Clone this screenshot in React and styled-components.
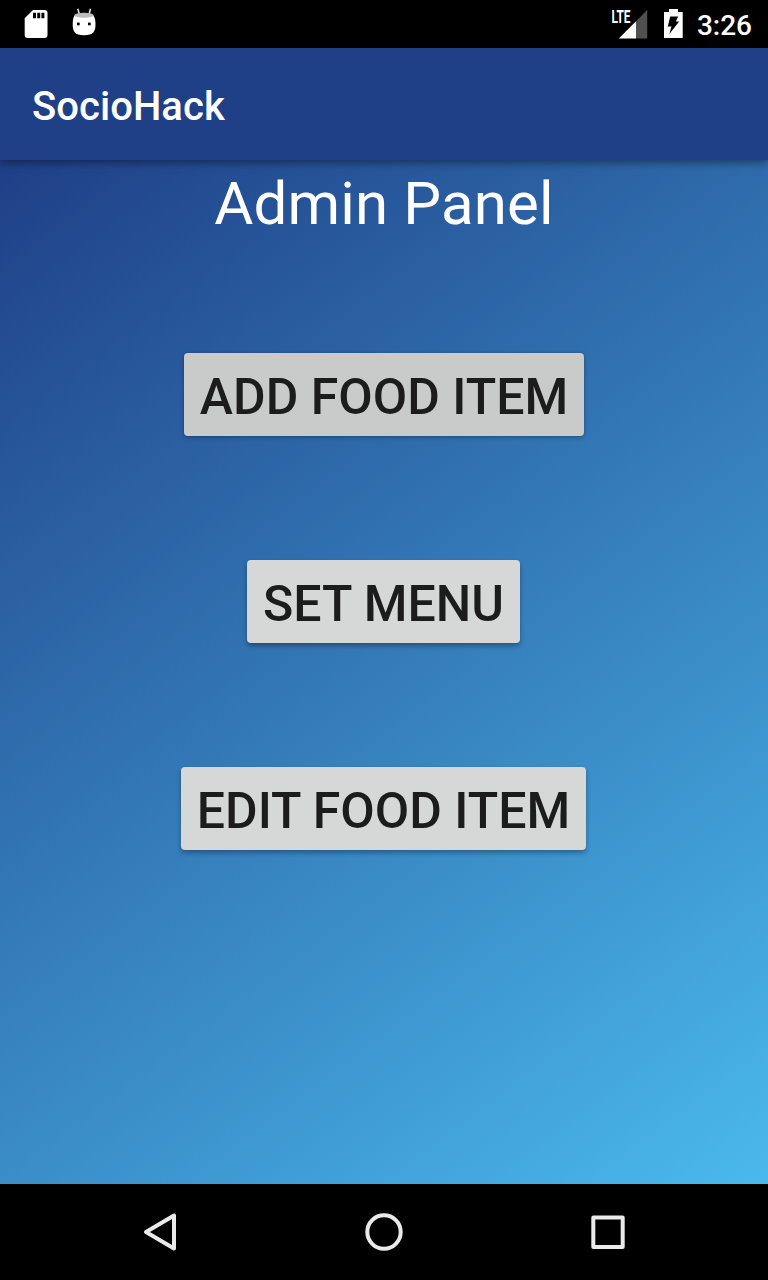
import React from "react";
import styled, { createGlobalStyle } from "styled-components";

const GlobalStyle = createGlobalStyle`
  * { box-sizing: border-box; }
  body { margin: 0; background: #000; font-family: Roboto, "Liberation Sans", sans-serif; }
`;

const Screen = styled.div`
  width: 768px;
  height: 1280px;
  display: flex;
  flex-direction: column;
  overflow: hidden;
`;

const StatusBar = styled.header`
  height: 48px;
  padding: 0 16px 0 20px;
  display: flex;
  justify-content: space-between;
  background: #000;
`;

const StatusGroup = styled.div`
  display: flex;
  align-items: flex-start;
  gap: ${(p) => p.$gap};
`;

const Clock = styled.span`
  margin-left: 5px;
  color: #fff;
  font-size: 28px;
  font-weight: 500;
  line-height: 52px;
`;

const AppBar = styled.div`
  position: relative;
  z-index: 1;
  flex: 0 0 112px;
  padding: 6px 32px 0;
  display: flex;
  align-items: center;
  background: #1f3f87;
  box-shadow: 0 3px 8px rgba(0, 0, 0, 0.4);
`;

const AppTitle = styled.h1`
  margin: 0;
  color: #fff;
  font-size: 40px;
  font-weight: 500;
  line-height: 48px;
  letter-spacing: 0.05px;
`;

const Content = styled.main`
  flex: 1;
  padding-top: 4px;
  display: flex;
  flex-direction: column;
  align-items: center;
  background: linear-gradient(143.13deg, #1f3f87, #4ab9ec);
`;

const PanelTitle = styled.h2`
  margin: 0 0 109px;
  color: #fff;
  font-size: 60px;
  font-weight: 400;
  line-height: 80px;
  letter-spacing: 0.15px;
`;

const ActionButton = styled.button`
  height: 83px;
  width: ${(p) => p.$width}px;
  margin: 0 ${(p) => p.$width % 2}px 124px 0;
  padding: 5px 0 0;
  border: 0;
  border-radius: 4px;
  background: ${(p) => (p.$dimmed ? "#c9cbca" : "#d6d8d7")};
  box-shadow: ${(p) =>
    p.$dimmed ? "0 1px 4px rgba(0, 0, 0, 0.35)" : "0 3px 5px rgba(0, 0, 0, 0.32)"};
  color: #1c1c1c;
  font-family: inherit;
  font-size: 50px;
  font-weight: 500;
  line-height: 78px;
  white-space: nowrap;
  text-transform: uppercase;
`;

const NavBar = styled.nav`
  flex: 0 0 96px;
  display: flex;
  align-items: center;
  justify-content: center;
  gap: 176px;
  background: #000;
`;

const NavIcon = styled.svg`
  width: 48px;
  height: 48px;
  fill: none;
  stroke: #eaeaea;
  stroke-width: 4;
  stroke-linejoin: round;
`;

const NetworkLabel = styled.text`
  fill: #fff;
  font-size: 17.5px;
  font-weight: 700;
`;

const SdCardIcon = () => (
  <svg width="32" height="48" viewBox="0 0 32 48">
    <path
      fill="#fff"
      fillRule="evenodd"
      d="M13 10H24.5Q27.5 10 27.5 13V35Q27.5 38 24.5 38H7.500Q4.700 38 4.700 35V18.300ZM13 12.700V18.300H16V12.700ZM17.200 12.700V18.300H20.200V12.700ZM21.400 12.700V18.300H24.400V12.700Z"
    />
  </svg>
);

const DebugIcon = () => (
  <svg width="32" height="48" viewBox="0 0 32 48">
    <path d="M9.800 8.700L11.300 14M22.500 8.700L21.200 14" stroke="#e8e8e8" strokeWidth="1.500" fill="none" />
    <path
      fill="#fff"
      d="M6.500 15.500C5.500 17 4.700 20 4.700 24C4.700 31.500 6.500 35.300 16 35.300S27.500 31.500 27.500 24C27.500 20 26.500 17 25.500 15.500Z"
    />
    <ellipse cx="16" cy="15.300" rx="9.700" ry="2.500" fill="#bcbcbc" />
    <rect x="9" y="22.600" width="2.700" height="2.700" fill="#000" />
    <rect x="20" y="22.600" width="2.700" height="2.700" fill="#000" />
  </svg>
);

const SignalIcon = () => (
  <svg width="36" height="48" viewBox="0 0 36 48">
    <path fill="#505050" d="M35.200 10V38.500H24V21.200Z" />
    <path fill="#fff" d="M24 21.200V38.500H6.800Z" />
    <NetworkLabel x="-0.500" y="22.700" textLength="19" lengthAdjust="spacingAndGlyphs">
      LTE
    </NetworkLabel>
  </svg>
);

const BatteryIcon = () => (
  <svg width="20" height="48" viewBox="0 0 20 48">
    <path fill="#fff" d="M5 9H14V12H18.700V38H0V12H5Z" />
    <path fill="#000" d="M6.200 16.500H14.200L11.800 21.500H15.200L5.300 34L7.500 26.500H3.800Z" />
  </svg>
);

const actions = [
  { label: "Add Food Item", width: 400, dimmed: true },
  { label: "Set Menu", width: 273 },
  { label: "Edit Food Item", width: 405 },
];

export default function App() {
  return (
    <>
      <GlobalStyle />
      <Screen>
        <StatusBar>
          <StatusGroup $gap="16px">
            <SdCardIcon />
            <DebugIcon />
          </StatusGroup>
          <StatusGroup $gap="8px">
            <StatusGroup $gap="16px">
              <SignalIcon />
              <BatteryIcon />
            </StatusGroup>
            <Clock>3:26</Clock>
          </StatusGroup>
        </StatusBar>
        <AppBar>
          <AppTitle>SocioHack</AppTitle>
        </AppBar>
        <Content>
          <PanelTitle>Admin Panel</PanelTitle>
          {actions.map((a) => (
            <ActionButton key={a.label} $width={a.width} $dimmed={a.dimmed}>
              {a.label}
            </ActionButton>
          ))}
        </Content>
        <NavBar>
          <NavIcon viewBox="0 0 48 48">
            <path d="M10 24L38 7.500V40.500Z" />
          </NavIcon>
          <NavIcon viewBox="0 0 48 48">
            <circle cx="24" cy="24" r="16.700" />
          </NavIcon>
          <NavIcon viewBox="0 0 48 48">
            <rect x="9.300" y="9.600" width="29.400" height="29.400" />
          </NavIcon>
        </NavBar>
      </Screen>
    </>
  );
}
